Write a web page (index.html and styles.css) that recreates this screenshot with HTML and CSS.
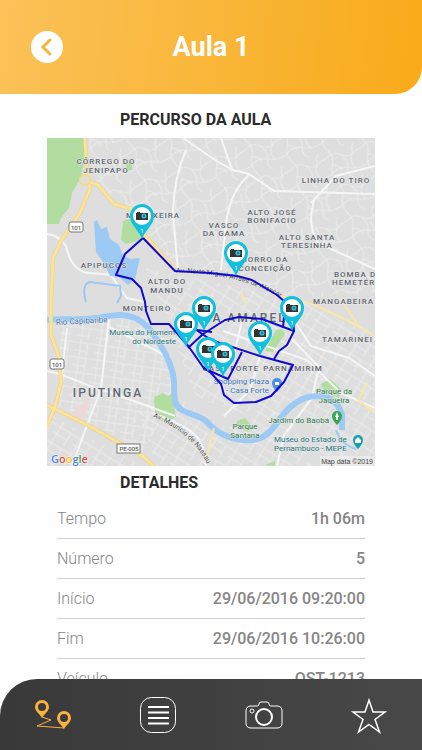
FILE: index.html
```html
<!DOCTYPE html>
<html lang="pt-BR">
<head>
    <meta charset="UTF-8">
    <meta name="viewport" content="width=device-width, initial-scale=1.0">
    <title>Aula 1</title>
    <link rel="stylesheet" href="styles.css">
</head>
<body>
    <header class="header">
        <button type="button" class="back" aria-label="Voltar">
            <svg viewBox="0 0 32 32" width="32" height="32"><path d="M19 9l-7 7 7 7"/></svg>
        </button>
        <h1>Aula 1</h1>
    </header>

    <main class="content">
        <h2>PERCURSO DA AULA</h2>
        <svg class="map" viewBox="0 0 328 328" role="img" aria-label="Mapa do percurso">
            <defs>
                <pattern id="grid" width="19" height="15" patternUnits="userSpaceOnUse" patternTransform="rotate(8)">
                    <path class="street" d="M0 3h19M0 11h12M5 0v15M12 3v12"/>
                </pattern>
                <pattern id="slant" width="23" height="18" patternUnits="userSpaceOnUse" patternTransform="rotate(32)">
                    <path class="street" d="M0 4h23M0 12h16M4 0v18M16 4v14"/>
                </pattern>
                <pattern id="hills" width="37" height="33" patternUnits="userSpaceOnUse" patternTransform="rotate(-18)">
                    <path class="street" d="M0 7q8-6 15 0t12 3 10-3M4 0q5 7 0 15t0 18M0 24q9-7 18-2t19 2M15 7q6 7 3 15t3 11M27 10q-6 6-2 14M30 0q-4 5-3 10M4 15q7 2 8 8"/>
                </pattern>
                <g id="pin">
                    <path class="pin-body" d="M0 23C-3 14-12 9-12 0a12 12 0 0 1 24 0C12 9 3 14 0 23z"/>
                    <circle class="pin-face" r="9"/>
                    <path class="pin-camera" d="M-5-4h3v1h8v7H-6v-7h1z"/>
                    <circle class="pin-lens" cx="2" r="2.6"/>
                    <circle class="pin-glass" cx="2" r="1"/>
                    <text class="pin-number" y="17">1</text>
                </g>
            </defs>

            <rect class="land" width="328" height="328"/>
            <path fill="url(#hills)" d="M40 0H328V155L245 160 190 137 128 132 95 95 84 70 50 47z"/>
            <path fill="url(#grid)" d="M14 178L95 178 121 195 130 255 96 312 12 268z"/>
            <path fill="url(#slant)" d="M98 130L245 160 328 196V328H275L255 265 215 282 150 260 130 210z"/>
            <path fill="url(#slant)" d="M0 275L95 328H0zM110 328L90 270 135 262 180 290 240 270 265 328z"/>

            <!-- parks -->
            <path class="park" d="M0 0h37l1 18-4 21-9 16-3 15-8 10-2 6H0z"/>
            <path class="park" d="M76 83l12-4 9 22-18 5-5-4zM79 24h6v8h-6z"/>
            <path class="park" d="M107 259l9-4 5 3 4-3 4 24-11 6-10-9zM218 213l11-21 7-1 2 5-12 18z"/>
            <path class="park" d="M274 246l9-5 11 10-2 9-14-5zM190 283l8-3 8 9-5 5-11-6zM218 327l10-4v5z"/>
            <path class="zone" d="M28 268l15-6-6 22-10-3z"/>

            <!-- main streets -->
            <g class="avenue">
                <path d="M0 96q12 1 19 12 5 24 22 27l28 2M136 0l32 22 18 10 16 4 25 17 101 3"/>
                <path d="M202 37q-19 16-23 49l-5 46M139 12q-12 27-13 63l5 58M174 0l11 32M268 60q-9 26 3 45l57 26M328 28l-39 10-25 27M60 132l20 28 18 4M62 179l-8 72-15 39-14 38M20 190l-5 46M62 189l62 31M54 251l74 27M0 233l13 3 40 16"/>
                <path d="M106 275q34 13 43 23t10 30M196 178l-8 35-18 24M176 193l84 29 34 33 34 15M213 218l-10 34-26 26M248 184l16 24 38 12 26 18M244 200l28 29-7 31-28 37-7 31"/>
            </g>

            <!-- water -->
            <path class="water" d="M47 84l3-2 4 9 6-2 3 12 9 6 4 10 7 4 10-1-5 21-7 6-9-8-9-1-7-14-7-10z"/>
            <path class="river" d="M39 164q-5-18 4-20l30 4 1 10-4 7"/>
            <path class="river wide" d="M0 182C16 180 32 183 50 180S76 175 88 180 107 197 114 208 126 230 127 244 125 266 135 272 154 277 161 285 178 300 196 302 223 296 233 281 257 258 270 258 291 265 295 276V292"/>
            <path class="river" d="M289 292q5 15 20 19"/>

            <!-- highways -->
            <path class="road-edge" d="M38 0l2 35 3 16-10 24-19 28-8 17-2 43v34l8 22 2 26-6 24-8 19M41 44l9 2 17 20 18 5 12 25 31 36M0 267l44 22 50 28 13 11"/>
            <path class="road" d="M38 0l2 35 3 16-10 24-19 28-8 17-2 43v34l8 22 2 26-6 24-8 19M41 44l9 2 17 20 18 5 12 25 31 36M0 267l44 22 50 28 13 11"/>
            <circle class="junction" cx="38" cy="42" r="5"/>
            <path class="road-minor" d="M128 133l35 2 26 3 16 4 27 16 33 8 31 14 32 18M194 155l5 10M320 245l-9 17 17 13M293 160l20 30M160 318l7-28"/>

            <g class="label">
                <text class="mid" x="59" y="26">CÓRREGO DO</text>
                <text class="mid" x="59" y="35">JENIPAPO</text>
                <text class="mid" x="289" y="45">LINHA DO TIRO</text>
                <text class="mid" x="225" y="77">ALTO JOSÉ</text>
                <text class="mid" x="225" y="85">BONIFACIO</text>
                <text class="mid" x="177" y="90">VASCO</text>
                <text class="mid" x="177" y="98">DA GAMA</text>
                <text class="mid" x="260" y="102">ALTO SANTA</text>
                <text class="mid" x="260" y="110">TERESINHA</text>
                <text class="mid" x="217" y="124">MORRO DA</text>
                <text class="mid" x="218" y="133">CONCEIÇÃO</text>
                <text x="287" y="139">BOMBA D</text>
                <text x="285" y="147">HEMETÉR</text>
                <text x="266" y="166">MANGABEIRA</text>
                <text x="275" y="204">TAMARINEI</text>
                <text class="mid" x="106" y="80">MACAXEIRA</text>
                <text class="mid" x="57" y="130">APIPUCOS</text>
                <text class="mid" x="120" y="146">ALTO DO</text>
                <text class="mid" x="120" y="155">MANDU</text>
                <text class="mid" x="100" y="173">MONTEIRO</text>
                <text class="mid" x="184" y="233">CASA FORTE</text>
                <text class="mid" x="246" y="233">PARNAMIRIM</text>
                <text class="mid large" x="61" y="259">IPUTINGA</text>
                <text class="mid large" x="188" y="184">CASA AMAREL</text>
            </g>
            <g class="place">
                <text class="blue" x="9" y="187" transform="rotate(-3 9 187)">Rio Capibaribe</text>
                <text class="teal end" x="128" y="197">Museu do Homem</text>
                <text class="teal end" x="129" y="206">do Nordeste</text>
                <text class="blue end" x="222" y="246">Shopping Plaza</text>
                <text class="blue end" x="222" y="255">- Casa Forte</text>
                <text class="green mid" x="287" y="256">Parque da</text>
                <text class="green mid" x="287" y="265">Jaqueira</text>
                <text class="green end" x="282" y="285">Jardim do Baobá</text>
                <text class="green mid" x="198" y="291">Parque</text>
                <text class="green mid" x="198" y="300">Santana</text>
                <text class="teal" x="227" y="304">Museu do Estado de</text>
                <text class="teal" x="227" y="313">Pernambuco - MEPE</text>
            </g>
            <path id="nassau" fill="none" d="M106 279q40 16 55 49"/>
            <path id="norte" fill="none" d="M129 135q63-1 112 29"/>
            <text class="road-name"><textPath href="#nassau">Av. Maurício de Nassau</textPath></text>
            <text class="road-name"><textPath href="#norte">Av. Norte Miguel Arraes de Alencar</textPath></text>

            <g class="shield">
                <rect x="22" y="84" width="14" height="10" rx="2"/>
                <text x="29" y="92">101</text>
                <rect x="3" y="221" width="14" height="10" rx="2"/>
                <text x="10" y="229">101</text>
                <rect x="70" y="306" width="23" height="9"/>
                <text x="82" y="313">PE-005</text>
            </g>

            <g class="poi">
                <path fill="#4a90e2" d="M230 254q-5-5-5-9a5 5 0 0 1 10 0q0 4-5 9z"/>
                <path fill="#fff" d="M228 244h4v3h-4z"/>
                <path fill="#34a853" d="M290 287q-5-5-5-9a5 5 0 0 1 10 0q0 4-5 9z"/>
                <path fill="#fff" d="M290 274l2 5h-1v3h-2v-3h-1z"/>
                <path fill="#16a1ad" d="M311 311q-5-5-5-9a5 5 0 0 1 10 0q0 4-5 9z"/>
                <path fill="#fff" d="M308 302l3-3 3 3v3h-6z"/>
            </g>

            <!-- route -->
            <path class="route" d="M96 100l-18 16-9 21 16 4 9 9 4 14 1 9 5 13h18l20 23 14 20 8 6 10 11 3 11 10 8 22-1 15-6 13-14 9-17-33-9-49-16-16-11-8-6-6 4"/>
            <path class="route" d="M96 100l32 33 35 2 27 3 15 4 25 15 15 13 2 23-7 14-8 6-5 8M247 193l-32-12-23-2-14 3-22 14-15 14M236 190l1-12M150 192l15 2M195 214l-14 27-25-11"/>

            <use href="#pin" x="95" y="78"/>
            <use href="#pin" x="189" y="115"/>
            <use href="#pin" x="245" y="170"/>
            <use href="#pin" x="157" y="170"/>
            <use href="#pin" x="139" y="186"/>
            <use href="#pin" x="161" y="211"/>
            <use href="#pin" x="213" y="195"/>
            <use href="#pin" x="176" y="216"/>

            <text class="google" x="4" y="325"><tspan fill="#4285f4">G</tspan><tspan fill="#ea4335">o</tspan><tspan fill="#fbbc05">o</tspan><tspan fill="#4285f4">g</tspan><tspan fill="#34a853">l</tspan><tspan fill="#ea4335">e</tspan></text>
            <rect class="credit-box" x="273" y="318" width="55" height="10"/>
            <text class="credit" x="326" y="326">Map data ©2019</text>
        </svg>

        <h2>DETALHES</h2>
        <dl class="details">
            <div class="row"><dt>Tempo</dt><dd>1h 06m</dd></div>
            <div class="row"><dt>Número</dt><dd>5</dd></div>
            <div class="row"><dt>Início</dt><dd>29/06/2016 09:20:00</dd></div>
            <div class="row"><dt>Fim</dt><dd>29/06/2016 10:26:00</dd></div>
            <div class="row"><dt>Veículo</dt><dd>OST-1213</dd></div>
        </dl>
    </main>

    <nav class="tabs">
        <a href="#percurso" class="active" aria-label="Percurso">
            <svg viewBox="0 0 38 36" width="38" height="36">
                <path class="solid" fill-rule="evenodd" d="M8 21C5 16 1 14 1 10a7 7 0 0 1 14 0c0 4-4 6-7 11zM8 6a4 4 0 1 0 0 8 4 4 0 0 0 0-8zM30 32c-3-5-7-7-7-11a7 7 0 0 1 14 0c0 4-4 6-7 11zM30 17a4 4 0 1 0 0 8 4 4 0 0 0 0-8z"/>
                <path d="M8 20l9 3-14 6 27 2"/>
            </svg>
        </a>
        <a href="#lista" aria-label="Lista">
            <svg viewBox="0 0 38 38" width="38" height="38">
                <rect x="1.5" y="1.5" width="35" height="35" rx="11"/>
                <path class="bars" d="M9 11h21M9 16.500h21M9 22h21M9 27.500h21"/>
            </svg>
        </a>
        <a href="#fotos" aria-label="Fotos">
            <svg viewBox="0 0 38 30" width="38" height="30">
                <path d="M6 6h6q2 0 2-2 0-2 2-2h6q2 0 2 2 0 2 2 2h6q5 0 5 5v12q0 5-5 5H6q-5 0-5-5V11q0-5 5-5z"/>
                <circle class="lens" cx="19" cy="17" r="8"/>
                <circle cx="7" cy="11" r="2"/>
            </svg>
        </a>
        <a href="#favoritos" aria-label="Favoritos">
            <svg viewBox="0 0 38 38" width="38" height="38">
                <path class="star" d="M19 4l4 12h12l-10 7.500 4.500 12.500L19 28.500 8.500 36 13 23.500 3 16h12z"/>
            </svg>
        </a>
    </nav>
</body>
</html>
```

FILE: styles.css
```css
* {
    box-sizing: border-box;
}

body {
    display: flex;
    flex-direction: column;
    height: 100vh;
    margin: 0;
    background-color: #fff;
    font-family: Roboto, Arial, sans-serif;
}

.header {
    display: grid;
    grid-template-columns: 32px 1fr 32px;
    align-items: center;
    flex: none;
    height: 94px;
    padding: 0 31px;
    background: linear-gradient(97deg, #fbc259, #f9b536 55%, #f9aa19);
    border-bottom-right-radius: 27px;
}

.back {
    width: 32px;
    height: 32px;
    padding: 0;
    border: none;
    border-radius: 50%;
    background-color: #fff;
    cursor: pointer;
}

.back svg {
    display: block;
    fill: none;
    stroke: #f9b43a;
    stroke-width: 3;
    stroke-linecap: round;
}

h1 {
    margin: 0;
    color: #fff;
    font-size: 27px;
    font-weight: 700;
    text-align: center;
}

.content {
    flex: 1;
    min-height: 0;
    overflow-y: auto;
    scrollbar-width: none;
    padding: 9px 47px 0;
}

h2 {
    margin: 0 0 0 73px;
    color: #2b2b2b;
    font-size: 16px;
    font-weight: 700;
    line-height: 33px;
}

.map {
    display: block;
    width: 100%;
    height: auto;
    margin-top: 2px;
}

.details {
    margin: 0;
    padding: 0 10px;
}

.row {
    display: flex;
    justify-content: space-between;
    height: 40px;
    border-bottom: 1px solid #d0d0d0;
    color: #858585;
    font-size: 16px;
    line-height: 40px;
}

.row dt {
    font-weight: 300;
}

.row dd {
    margin: 0;
    font-weight: 500;
}

/* Map */
.land { fill: #dedede; }
.street { fill: none; stroke: #ececec; stroke-width: 1; }
.avenue { fill: none; stroke: #f6f6f6; stroke-width: 2; }
.park { fill: #b2dda0; }
.zone { fill: #ead9d8; }
.water { fill: #9ccaf5; }
.river { fill: none; stroke: #9ccaf5; stroke-width: 2; }
.river.wide { stroke-width: 6; }
.road, .road-edge { fill: none; stroke: #fae39a; stroke-width: 3; stroke-linejoin: round; }
.road-edge { stroke: #ecd080; stroke-width: 4; }
.road-minor { fill: none; stroke: #fae6a5; stroke-width: 2; }
.junction { fill: #dedede; stroke: #f5da88; stroke-width: 2; }

.map text {
    paint-order: stroke;
    stroke: #e8e8e8;
    stroke-width: 1px;
}

.mid { text-anchor: middle; }
.end { text-anchor: end; }

.label {
    fill: #5f6772;
    font-size: 8px;
    font-weight: 500;
    letter-spacing: 1px;
}

.label .large {
    font-size: 12px;
    letter-spacing: 2px;
}

.place { font-size: 8px; }
.blue { fill: #4279bb; }
.teal { fill: #207880; }
.green { fill: #2d7a4a; }
.road-name { fill: #555; font-size: 7px; }

.shield rect {
    fill: #fff;
    stroke: #777;
}

.shield text {
    fill: #555;
    font-size: 6px;
    text-anchor: middle;
}

.route {
    fill: none;
    stroke: #1009cf;
    stroke-width: 2;
    stroke-linejoin: round;
}

.pin-body { fill: #12bfdc; }
.pin-face { fill: #fff; }
.pin-camera { fill: #333; }
.pin-lens { fill: #35bad4; }
.pin-glass { fill: #27656f; }

.map .pin-number {
    fill: #fff;
    stroke: none;
    font-size: 6px;
    text-anchor: middle;
}

.map .google {
    stroke: #fff;
    font-family: "Open Sans", sans-serif;
    font-size: 11px;
    font-weight: 600;
}

.credit-box { fill: #eee; opacity: 0.7; }

.map .credit {
    fill: #444;
    stroke: none;
    font-family: "Liberation Sans", Arial, sans-serif;
    font-size: 7px;
    text-anchor: end;
}

/* Bottom tabs */
.tabs {
    display: grid;
    grid-template-columns: repeat(4, 1fr);
    flex: none;
    height: 71px;
    background: linear-gradient(90deg, #393939, #484848);
    border-top-left-radius: 37px;
}

.tabs a {
    display: flex;
    align-items: center;
    justify-content: center;
    color: #fff;
}

.tabs .active {
    color: #fbb040;
}

.tabs svg {
    fill: none;
    stroke: currentColor;
    stroke-width: 1;
}

.tabs .solid {
    fill: currentColor;
    stroke: none;
}

.tabs .bars { stroke-width: 2; }
.tabs .lens { stroke-width: 2; }
.tabs .star { stroke-width: 1.500; }
```
